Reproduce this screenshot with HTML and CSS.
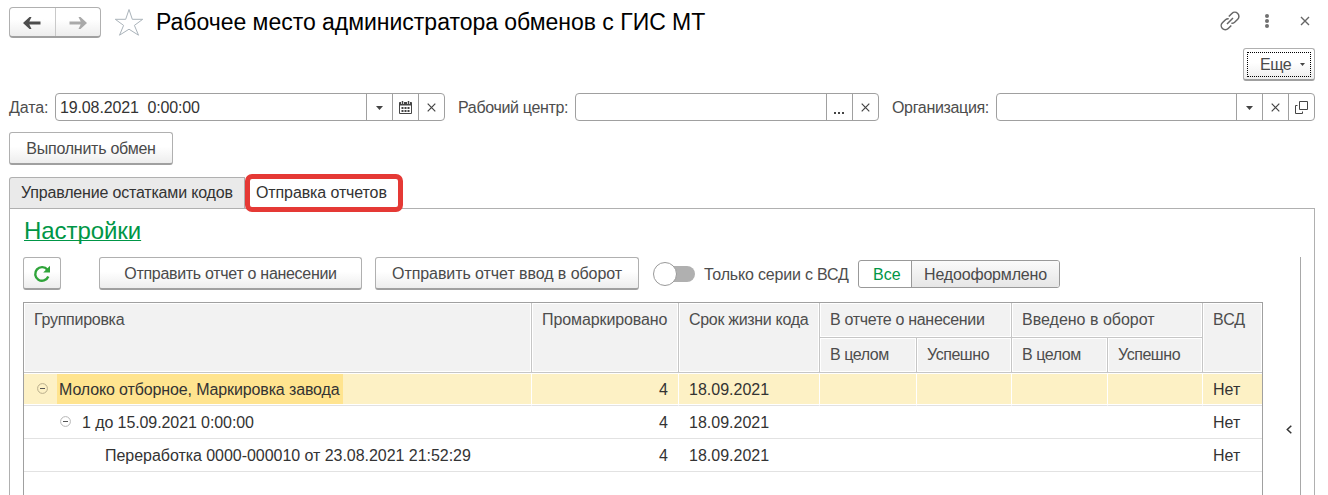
FILE: index.html
```html
<!DOCTYPE html>
<html lang="ru">
<head>
<meta charset="utf-8">
<title>Рабочее место администратора обменов с ГИС МТ</title>
<link rel="stylesheet" href="styles.css">
</head>
<body>
<main class="window">
  <header class="titlebar">
    <div class="nav">
      <button class="nav-btn"><svg width="18" height="12" viewBox="0 0 18 12"><path d="M0 6L6.500 0H8.500L6.300 4.600H17.500V7.400H6.300L8.500 12H6.500Z" fill="#4d4d4d"/></svg></button>
      <button class="nav-btn"><svg width="18" height="12" viewBox="0 0 18 12"><path d="M18 6L11.500 0H9.500L11.700 4.600H.500V7.400H11.700L9.500 12H11.500Z" fill="#a9a9a9"/></svg></button>
    </div>
    <svg class="star" width="30" height="29" viewBox="0 0 30 29"><path d="M15 1.500L18.300 11.300H28.700L20.400 17.400L24.500 27.200L15 21.200L5.500 27.200L9.600 17.400L1.300 11.300H11.700Z" fill="#fff" stroke="#aab3ba" stroke-width="1"/></svg>
    <h1 class="title">Рабочее место администратора обменов с ГИС МТ</h1>
    <div class="window-tools">
      <svg class="link" width="22" height="22" viewBox="0 0 22 22" fill="none" stroke="#666" stroke-width="1.500"><path d="M9.800 6.500L12.900 3.500A4.100 4.100 0 0 1 18.700 9.300L15.600 12.300A4.100 4.100 0 0 1 12.400 13.300M12.300 15.500L9.200 18.500A4.100 4.100 0 0 1 3.400 12.700L6.500 9.700A4.100 4.100 0 0 1 9.700 8.700M8 14L14 8"/></svg>
      <svg class="dots" width="6" height="16" viewBox="0 0 6 16" fill="#707070"><circle cx="3" cy="3" r="2"/><circle cx="3" cy="8" r="2"/><circle cx="3" cy="13" r="2"/></svg>
      <svg width="10" height="10" viewBox="0 0 10 10"><path d="M1 1L9 9M9 1L1 9" stroke="#666" stroke-width="1.400"/></svg>
    </div>
  </header>

  <div class="more-row">
    <button class="btn more"><span class="focus"><span class="more-text">Еще</span><svg width="5" height="3" viewBox="0 0 5 3"><path d="M0 0H5L2.500 3Z" fill="#444"/></svg></span></button>
  </div>

  <div class="filters">
    <label class="label date-label">Дата:</label>
    <div class="field date-field">
      <span class="value">19.08.2021&nbsp; 0:00:00</span>
      <span class="addon"><svg width="7" height="4" viewBox="0 0 7 4"><path d="M0 0H7L3.500 4Z" fill="#444"/></svg></span>
      <span class="addon"><svg width="13" height="14" viewBox="0 0 13 14"><path d="M.500 1.500H12.500V12.500H.500Z" fill="#fff" stroke="#444"/><path d="M.500 1.500H12.500V4.500H.500Z" fill="#444"/><path d="M3.500 0V3M9.500 0V3" stroke="#fff" stroke-width="3"/><path d="M3.500 0V3M9.500 0V3" stroke="#444" stroke-width="1.500"/><path d="M2.500 7H11M2.500 10H11" stroke="#444" stroke-width="2" stroke-dasharray="2 1"/></svg></span>
      <span class="addon"><svg width="9" height="9" viewBox="0 0 9 9"><path d="M.700 .700L8.300 8.300M8.300 .700L.700 8.300" stroke="#444" stroke-width="1.200"/></svg></span>
    </div>
    <label class="label center-label">Рабочий центр:</label>
    <div class="field center-field">
      <span class="value"></span>
      <span class="addon"><svg class="ellipsis" width="11" height="2" viewBox="0 0 11 2"><path d="M0 0H2V2H0ZM4 0H6V2H4ZM8 0H10V2H8Z" fill="#444"/></svg></span>
      <span class="addon"><svg width="9" height="9" viewBox="0 0 9 9"><path d="M.700 .700L8.300 8.300M8.300 .700L.700 8.300" stroke="#444" stroke-width="1.200"/></svg></span>
    </div>
    <label class="label org-label">Организация:</label>
    <div class="field org-field">
      <span class="value"></span>
      <span class="addon"><svg width="7" height="4" viewBox="0 0 7 4"><path d="M0 0H7L3.500 4Z" fill="#444"/></svg></span>
      <span class="addon"><svg width="9" height="9" viewBox="0 0 9 9"><path d="M.700 .700L8.300 8.300M8.300 .700L.700 8.300" stroke="#444" stroke-width="1.200"/></svg></span>
      <span class="addon"><svg width="13" height="13" viewBox="0 0 13 13" fill="none" stroke="#444"><path d="M4.500 .500H12.500V8.500H4.500ZM2.500 4.500H.500V12.500H7.500V10.500"/></svg></span>
    </div>
  </div>

  <div class="exchange-row"><button class="btn exchange">Выполнить обмен</button></div>

  <nav class="tabs">
    <a class="tab">Управление остатками кодов</a>
    <a class="tab active">Отправка отчетов</a>
  </nav>

  <section class="panel">
    <div class="content">
      <a class="settings">Настройки</a>
      <div class="toolbar">
        <button class="btn refresh"><svg width="18" height="18" viewBox="0 0 18 18"><path d="M14.400 4.800A6.800 6.800 0 1 0 15.300 11.500" fill="none" stroke="#2fa43a" stroke-width="2.400"/><path d="M17 .800V7.600H10.200Z" fill="#2fa43a"/></svg></button>
        <button class="btn apply">Отправить отчет о нанесении</button>
        <button class="btn turnover">Отправить отчет ввод в оборот</button>
        <span class="toggle"><span class="knob"></span></span>
        <span class="label toggle-label">Только серии с ВСД</span>
        <div class="segment"><span class="seg on">Все</span><span class="seg off">Недооформлено</span></div>
      </div>
      <div class="grid">
        <div class="head tall group">Группировка</div>
        <div class="head tall marked">Промаркировано</div>
        <div class="head tall life">Срок жизни кода</div>
        <div class="head wide applied">В отчете о нанесении</div>
        <div class="head wide entered">Введено в оборот</div>
        <div class="head tall last">ВСД</div>
        <div class="head sub">В целом</div><div class="head sub">Успешно</div><div class="head sub">В целом</div><div class="head sub">Успешно</div>

        <div class="cell sel lvl1"><svg class="minus" width="11" height="11" viewBox="0 0 11 11"><circle cx="5.500" cy="5.500" r="4.900" fill="none" stroke="#b8ad8b"/><path d="M3 5.500H8" stroke="#555"/></svg><span class="current">Молоко отборное, Маркировка завода</span></div>
        <div class="cell sel num">4</div><div class="cell sel">18.09.2021</div><div class="cell sel"></div><div class="cell sel"></div><div class="cell sel"></div><div class="cell sel"></div><div class="cell sel last">Нет</div>

        <div class="cell lvl2"><svg class="minus" width="11" height="11" viewBox="0 0 11 11"><circle cx="5.500" cy="5.500" r="4.900" fill="none" stroke="#b5b5b5"/><path d="M3 5.500H8" stroke="#555"/></svg><span class="batch">1 до 15.09.2021 0:00:00</span></div>
        <div class="cell num">4</div><div class="cell">18.09.2021</div><div class="cell"></div><div class="cell"></div><div class="cell"></div><div class="cell"></div><div class="cell last">Нет</div>

        <div class="cell lvl3">Переработка 0000-000010 от 23.08.2021 21:52:29</div>
        <div class="cell num">4</div><div class="cell">18.09.2021</div><div class="cell"></div><div class="cell"></div><div class="cell"></div><div class="cell"></div><div class="cell last">Нет</div>
      </div>
    </div>
    <aside class="side"><svg width="6" height="9" viewBox="0 0 6 9"><path d="M5.300 .700L1.300 4.500L5.300 8.300" fill="none" stroke="#333" stroke-width="1.500"/></svg></aside>
  </section>
</main>
</body>
</html>
```
FILE: styles.css
```css
* { box-sizing: border-box; }
body { margin: 0; background: #fff; font: 16px/20px "Liberation Sans", Arial, sans-serif; color: #333; overflow: hidden; }
svg { display: block; flex: none; }
button { font: inherit; color: #4a4a4a; padding: 0; margin: 0; }
.window { width: 1328px; height: 495px; padding: 7px 13px 0 9px; display: flex; flex-direction: column; white-space: nowrap; overflow: hidden; }
.titlebar { display: flex; height: 41px; flex: none; align-items: flex-start; }
.nav { display: flex; width: 92px; height: 31px; border: 1px solid #b0b0b0; border-bottom: 2px solid #a0a0a0; border-radius: 4px; background: linear-gradient(#fff 40%, #ededed); }
.nav-btn { flex: 1; border: 0; background: none; display: flex; align-items: center; justify-content: center; padding-top: 1px; }
.nav-btn + .nav-btn { border-left: 1px solid #c9c9c9; }
.star { margin: 1px 0 0 13px; }
.title { margin: 1px 0 0 12px; font-size: 23px; line-height: 28px; font-weight: 400; letter-spacing: -.02px; color: #000; }
.window-tools { margin: 3px 5px 0 auto; display: flex; align-items: center; height: 22px; }
.link { margin-right: -1px; }
.dots { margin: 0 30px 0 24px; }
.btn { display: flex; align-items: center; justify-content: center; height: 33px; padding-top: 1px; border: 1px solid #b0b0b0; border-bottom: 2px solid #a0a0a0; border-radius: 3px; background: linear-gradient(#fff 45%, #ededed); }
.more-row { height: 45px; flex: none; display: flex; justify-content: flex-end; }
.more { width: 72px; padding: 0; }
.focus { width: 64px; height: 25px; border: 1px dotted #000; display: flex; align-items: center; padding: 1px 5px 0 12px; justify-content: space-between; }
.more-text { letter-spacing: -.5px; }
.filters { display: flex; height: 39px; flex: none; align-items: flex-start; }
.label { color: #4d4d4d; }
.filters .label { line-height: 29px; letter-spacing: -.33px; }
.filters .date-label { width: 46px; letter-spacing: -.1px; }
.center-label { width: 117px; margin-left: 13px; }
.org-label { width: 104px; margin-left: 13px; }
.field { display: flex; height: 28px; border: 1px solid #a0a0a0; border-radius: 4px; }
.date-field { width: 390px; }
.center-field { width: 304px; }
.org-field { width: 319px; }
.value { flex: 1; padding-left: 4px; line-height: 27px; letter-spacing: -.13px; }
.addon { width: 26px; padding: 1px 1px 0 0; border-left: 1px solid #a0a0a0; display: flex; align-items: center; justify-content: center; }
.ellipsis { margin-top: 10px; }
.exchange-row { height: 45px; flex: none; }
.exchange { width: 164px; letter-spacing: -.25px; }
.tabs { height: 31px; flex: none; display: flex; }
.tab { width: 236px; height: 31px; border: 1px solid #b0b0b0; border-bottom: 0; border-radius: 3px 0 0 0; background: #eaeaea; line-height: 30px; padding-left: 11px; letter-spacing: -.18px; color: #333; }
.tab.active { width: 158px; height: 38px; margin-top: -3px; background: #fff; border: 5px solid #e53935; border-radius: 7px; line-height: 27px; padding-left: 6px; letter-spacing: -.11px; position: relative; z-index: 1; }
.panel { flex: 1; min-height: 0; border: 1px solid #b0b0b0; border-bottom: 0; display: flex; padding: 8px 13px 0 13px; }
.content { width: 1240px; display: flex; flex-direction: column; }
.settings { align-self: flex-start; height: 40px; flex: none; padding-left: 1px; font-size: 24px; line-height: 27px; letter-spacing: -.06px; color: #009646; text-decoration: underline; text-decoration-thickness: 1px; text-underline-offset: 1px; text-decoration-skip-ink: none; }
.toolbar { display: flex; height: 45px; flex: none; }
.refresh { width: 38px; }
.apply { width: 263px; margin-left: 38px; letter-spacing: -.3px; }
.turnover { width: 264px; margin-left: 13px; letter-spacing: -.07px; }
.toggle { width: 36px; height: 16px; margin: 9px 0 0 20px; border-radius: 8px; background: #b0b0b0; position: relative; }
.knob { position: absolute; left: -6px; top: -4px; width: 24px; height: 24px; border: 1px solid #999; border-radius: 50%; background: #fff; }
.toggle-label { width: 146px; margin-left: 9px; line-height: 35px; letter-spacing: -.19px; }
.segment { display: flex; width: 202px; height: 28px; margin: 3px 0 0 8px; border: 1px solid #999; border-radius: 3px; overflow: hidden; line-height: 27px; }
.seg.on { width: 52px; padding-left: 14px; color: #009646; }
.seg.off { flex: 1; padding-left: 12px; border-left: 1px solid #999; background: linear-gradient(#fafafa, #e6e6e6); letter-spacing: -.17px; color: #4a4a4a; }
.grid { flex: 1; border: 1px solid #a0a0a0; border-bottom: 0; display: grid; grid-template-columns: 508px 147px 141px 97px 95px 96px 95px 59px; grid-template-rows: 35px 35px 33px 33px 33px; }
.head { border: 1px solid #c6c6c6; border-width: 0 1px 1px 0; background: #f2f2f2; box-shadow: inset 0 0 0 1px #fff; color: #4d4d4d; padding: 7px 0 0 10px; }
.tall { grid-row: 1 / 3; }
.group { letter-spacing: -.27px; }
.marked { grid-column: 2; letter-spacing: -.1px; }
.life { grid-column: 3; letter-spacing: -.31px; }
.applied { grid-column: 4 / 6; letter-spacing: -.3px; }
.entered { grid-column: 6 / 8; }
.head.last { grid-column: 8; border-right: 0; }
.sub { grid-row: 2; letter-spacing: -.45px; }
.cell { display: flex; align-items: center; padding: 1px 0 0 10px; border-bottom: 1px solid #e2e2e2; }
.cell.sel { background: #fdf1c5; border-right: 1px solid #fff; box-shadow: inset 0 1px #fff, inset 0 -1px #fff; }
.cell.last { border-right: 0; }
.cell.num { justify-content: flex-end; padding: 1px 11px 0 0; }
.cell.sel.num { padding-right: 10px; }
.cell.lvl1 { padding-left: 13px; }
.cell.lvl2 { padding-left: 36px; }
.cell.lvl3 { padding-left: 81px; letter-spacing: -.04px; }
.minus { margin-top: -2px; }
.current { width: 286px; height: 30px; line-height: 31px; margin: -1px 0 0 9px; padding-left: 2px; background: #ffe48f; letter-spacing: -.13px; }
.batch { margin-left: 11px; letter-spacing: -.09px; }
.side { width: 26px; margin: 40px 0 0 12px; border-right: 1px solid #a8a8a8; padding: 168px 0 0 11px; }
```
